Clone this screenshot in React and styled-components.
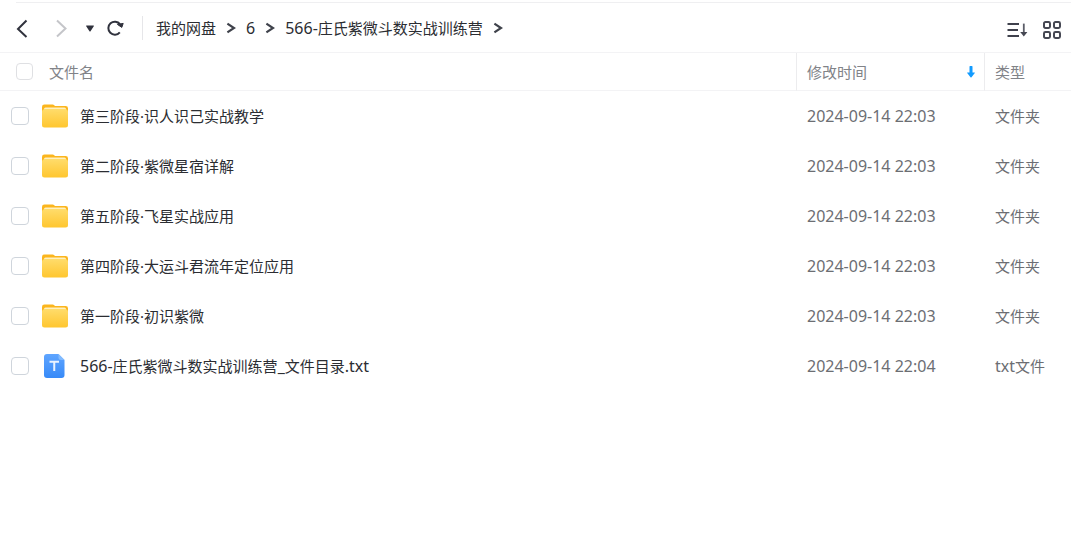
import React, { useState } from "react";
import styled, { createGlobalStyle } from "styled-components";

const GlobalStyle = createGlobalStyle`
    body {
        margin: 0;
        background-color: #ffffff;
        font-family: "Noto Sans", "Noto Sans CJK SC", sans-serif;
        font-size: 15px;
        line-height: 20px;
        color: #2b2d32;
    }
`;

const Page = styled.main`
    display: flex;
    flex-direction: column;
    padding-top: 2px;
`;

const TopLine = styled.div`
    height: 1px;
    margin-left: 16px;
    background-color: #efeff1;
`;

const Toolbar = styled.header`
    display: flex;
    align-items: center;
    justify-content: space-between;
    height: 49px;
    padding: 0px 10px 0px 6px;
    border-bottom: 1px solid #f3f3f5;
`;

const ToolGroup = styled.div`
    display: flex;
    align-items: center;
    gap: ${props => props.$gap}px;
`;

const ViewGroup = styled(ToolGroup)`
    padding-top: 4px;
`;

const IconButton = styled.button`
    display: flex;
    align-items: center;
    justify-content: center;
    width: ${props => props.$width || 32}px;
    height: 32px;
    padding: 0;
    border: none;
    background: none;
    color: #30323d;
    cursor: pointer;

    &:disabled {
        color: #c4c5c9;
        cursor: default;
    }

    svg {
        flex-shrink: 0;
    }
`;

const Divider = styled.div`
    width: 1px;
    height: 24px;
    margin: 0px 13px 0px 14px;
    background-color: #e6e6e9;
`;

const Crumbs = styled.nav`
    display: flex;
    align-items: center;
    gap: 9px;
`;

const CrumbLink = styled.a`
    color: inherit;
    text-decoration: none;
`;

const Latin = styled.span`
    font-size: 16px;
`;

const FileTable = styled.table`
    width: 100%;
    table-layout: fixed;
    border-collapse: separate;
    border-spacing: 0;
`;

const HeadCell = styled.th`
    box-sizing: border-box;
    width: ${props => props.$width || "auto"};
    height: 38px;
    padding: 0px 8px 0px ${props => (props.$first ? "16px" : "10px")};
    border-bottom: 1px solid #f3f3f5;
    border-left: ${props => (props.$first ? "none" : "1px solid #ececee")};
    color: #818388;
    font-weight: normal;
    text-align: left;
`;

const HeadLabel = styled.label`
    display: flex;
    align-items: center;
    gap: 16px;
`;

const SortButton = styled.button`
    display: flex;
    align-items: center;
    justify-content: space-between;
    width: 100%;
    padding: 0;
    border: none;
    background: none;
    font: inherit;
    color: inherit;
    cursor: pointer;
`;

const Row = styled.tr`
    &:hover {
        background-color: #fafafc;
    }
`;

const Cell = styled.td`
    height: 50px;
    padding: 0px 8px 0px 11px;
    color: #6c6e73;
`;

const NameContent = styled.div`
    display: flex;
    align-items: center;
    gap: 13px;
    color: #2b2d32;
`;

const FileLabel = styled.label`
    display: flex;
    align-items: center;
    gap: 12px;
`;

const Checkbox = styled.input`
    appearance: none;
    box-sizing: border-box;
    flex-shrink: 0;
    width: ${props => (props.$head ? "17px" : "18px")};
    height: ${props => (props.$head ? "17px" : "18px")};
    margin: 0;
    border: 1px solid ${props => (props.$head ? "#dfe0e3" : "#cfd5dc")};
    border-radius: 4px;
    background-color: #ffffff;
    cursor: pointer;

    &:checked {
        border-color: #06a7ff;
        background-color: #06a7ff;
    }
`;

const files = [
    { id: 1, name: "第三阶段·识人识己实战教学", time: "2024-09-14 22:03", type: "文件夹", folder: true },
    { id: 2, name: "第二阶段·紫微星宿详解", time: "2024-09-14 22:03", type: "文件夹", folder: true },
    { id: 3, name: "第五阶段·飞星实战应用", time: "2024-09-14 22:03", type: "文件夹", folder: true },
    { id: 4, name: "第四阶段·大运斗君流年定位应用", time: "2024-09-14 22:03", type: "文件夹", folder: true },
    { id: 5, name: "第一阶段·初识紫微", time: "2024-09-14 22:03", type: "文件夹", folder: true },
    { id: 6, name: "566-庄氏紫微斗数实战训练营_文件目录.txt", time: "2024-09-14 22:04", type: "txt文件", folder: false },
];

const crumbs = ["我的网盘", "6", "566-庄氏紫微斗数实战训练营"];

// Latin letters and digits are set one size up next to the Chinese text
function MixedText({ children }) {
    return (
        <span>
            {children.split(/([ -~]+)/).filter(Boolean).map((part, index) => (
                /^[ -~]/.test(part) ? <Latin key={index}>{part}</Latin> : part
            ))}
        </span>
    );
}

function BackIcon() {
    return (
        <svg width="14" height="20" viewBox="0 0 14 20" fill="none" stroke="currentColor" strokeWidth="2">
            <path d="M11.5 2.5L3 11L11.5 19" />
        </svg>
    );
}

function ForwardIcon() {
    return (
        <svg width="14" height="20" viewBox="0 0 14 20" fill="none" stroke="currentColor" strokeWidth="2">
            <path d="M2 2.5L10.5 10.5L2 18.5" />
        </svg>
    );
}

function CaretIcon() {
    return (
        <svg width="12" height="12" viewBox="0 0 12 12" fill="currentColor">
            <path d="M2.6 3.5h6.8q.9 0 .4.8L6.7 9q-.7 1-1.4 0L2.2 4.3q-.5-.8.4-.8z" />
        </svg>
    );
}

function RefreshIcon() {
    return (
        <svg width="18" height="18" viewBox="0 0 18 18" fill="none">
            <path d="M13.8 13.4A6.5 6.5 0 1 1 14 5.2" stroke="currentColor" strokeWidth="2" />
            <path d="M11.4 5.4L17.2 4.4L15.8 8.4z" fill="currentColor" stroke="currentColor" strokeWidth="1" strokeLinejoin="round" />
        </svg>
    );
}

function CrumbArrow() {
    return (
        <svg width="12" height="12" viewBox="0 0 12 12" fill="none" stroke="#3f424b" strokeWidth="2.2">
            <path d="M2.4 1.6L9 6L2.4 10.4" />
        </svg>
    );
}

function SortListIcon() {
    return (
        <svg width="21" height="18" viewBox="0 0 21 18" fill="none">
            <path d="M0.5 3H12M0.5 9H11M0.5 15H12" stroke="#3f414c" strokeWidth="2" />
            <path d="M16.8 2.6V12" stroke="#5b5d68" strokeWidth="1.8" />
            <path d="M13.2 11H20.4L16.8 15.6z" fill="#454752" />
        </svg>
    );
}

function GridIcon() {
    return (
        <svg width="18" height="18" viewBox="0 0 18 18" fill="none" stroke="#454752" strokeWidth="2">
            <rect x="1" y="1" width="6" height="6" rx="1.4" />
            <rect x="11" y="1" width="6" height="6" rx="1.4" />
            <rect x="1" y="11" width="6" height="6" rx="1.4" />
            <rect x="11" y="11" width="6" height="6" rx="1.4" />
        </svg>
    );
}

function ArrowDownIcon() {
    return (
        <svg width="10" height="14" viewBox="0 0 10 14" fill="#129bff">
            <path d="M3.5 1.6q0-.6.6-.6h1.8q.6 0 .6.6V7.5h2q.8 0 .3.6L5.5 12.3q-.5.5-1 0L1.200 8.100q-.5-.6.3-.6h2z" />
        </svg>
    );
}

function FolderIcon() {
    return (
        <svg width="26" height="26" viewBox="0 0 26 26">
            <defs>
                <linearGradient id="folderFront" x1="0" y1="0" x2="0" y2="1">
                    <stop offset="0" stopColor="#ffdc6b" />
                    <stop offset="1" stopColor="#ffc62f" />
                </linearGradient>
            </defs>
            <path d="M0 4q0-2.400 2.400-2.400h8.200q1 0 1.700.7l.6.6h10.700q2.400 0 2.400 2.400V14H0z" fill="#fbb51d" />
            <rect x="2" y="4.5" width="22" height="8" rx="1.5" fill="#fff0bd" />
            <path d="M0 8.500q0-2 2.500-2.500h21Q26 6.500 26 8.500V22q0 2.500-2.500 2.500h-21Q0 24.500 0 22z" fill="url(#folderFront)" />
        </svg>
    );
}

function TextFileIcon() {
    return (
        <svg width="26" height="26" viewBox="0 0 26 26">
            <defs>
                <linearGradient id="textFile" x1="0" y1="0" x2="0" y2="1">
                    <stop offset="0" stopColor="#5fa5ff" />
                    <stop offset="1" stopColor="#378af8" />
                </linearGradient>
            </defs>
            <path d="M2 4q0-3 3-3h11.500L22.500 7v15q0 3-3 3H5q-3 0-3-3z" fill="url(#textFile)" />
            <path d="M16.500 1L22.500 7h-3.500q-2.500 0-2.500-2.500z" fill="#82bbff" />
            <path d="M7.500 8.800H17M12.250 8.800V18" stroke="#e9f3ff" strokeWidth="2" fill="none" />
        </svg>
    );
}

export function FileList() {
    const [selected, setSelected] = useState([]);
    const allSelected = selected.length === files.length;

    const toggleAll = () => {
        setSelected(allSelected ? [] : files.map((file) => file.id));
    };

    const toggleFile = (id) => {
        setSelected((prev) => (prev.includes(id) ? prev.filter((item) => item !== id) : [...prev, id]));
    };

    return (
        <FileTable>
            <thead>
                <tr>
                    <HeadCell $first>
                        <HeadLabel>
                            <Checkbox $head type="checkbox" checked={allSelected} onChange={toggleAll} />
                            文件名
                        </HeadLabel>
                    </HeadCell>
                    <HeadCell $width="188px">
                        <SortButton type="button">
                            修改时间
                            <ArrowDownIcon />
                        </SortButton>
                    </HeadCell>
                    <HeadCell $width="87px">类型</HeadCell>
                </tr>
            </thead>
            <tbody>
                {files.map((file) => (
                    <Row key={file.id}>
                        <Cell>
                            <NameContent>
                                <Checkbox
                                    id={`file-${file.id}`}
                                    type="checkbox"
                                    checked={selected.includes(file.id)}
                                    onChange={() => toggleFile(file.id)}
                                />
                                <FileLabel htmlFor={`file-${file.id}`}>
                                    {file.folder ? <FolderIcon /> : <TextFileIcon />}
                                    <MixedText>{file.name}</MixedText>
                                </FileLabel>
                            </NameContent>
                        </Cell>
                        <Cell><MixedText>{file.time}</MixedText></Cell>
                        <Cell><MixedText>{file.type}</MixedText></Cell>
                    </Row>
                ))}
            </tbody>
        </FileTable>
    );
}

function App() {
    return (
        <>
            <GlobalStyle />
            <Page>
                <TopLine />
                <Toolbar>
                    <ToolGroup $gap={0}>
                        <ToolGroup $gap={8}>
                            <IconButton type="button" aria-label="后退"><BackIcon /></IconButton>
                            <IconButton type="button" aria-label="前进" disabled><ForwardIcon /></IconButton>
                        </ToolGroup>
                        <IconButton type="button" aria-label="历史" $width={24}><CaretIcon /></IconButton>
                        <IconButton type="button" aria-label="刷新" $width={26}><RefreshIcon /></IconButton>
                        <Divider />
                        <Crumbs>
                            {crumbs.map((crumb) => (
                                <React.Fragment key={crumb}>
                                    <CrumbLink href="#"><MixedText>{crumb}</MixedText></CrumbLink>
                                    <CrumbArrow />
                                </React.Fragment>
                            ))}
                        </Crumbs>
                    </ToolGroup>
                    <ViewGroup $gap={15}>
                        <IconButton type="button" aria-label="排序" $width={21}><SortListIcon /></IconButton>
                        <IconButton type="button" aria-label="网格" $width={18}><GridIcon /></IconButton>
                    </ViewGroup>
                </Toolbar>
                <FileList />
            </Page>
        </>
    );
}

export default App;
